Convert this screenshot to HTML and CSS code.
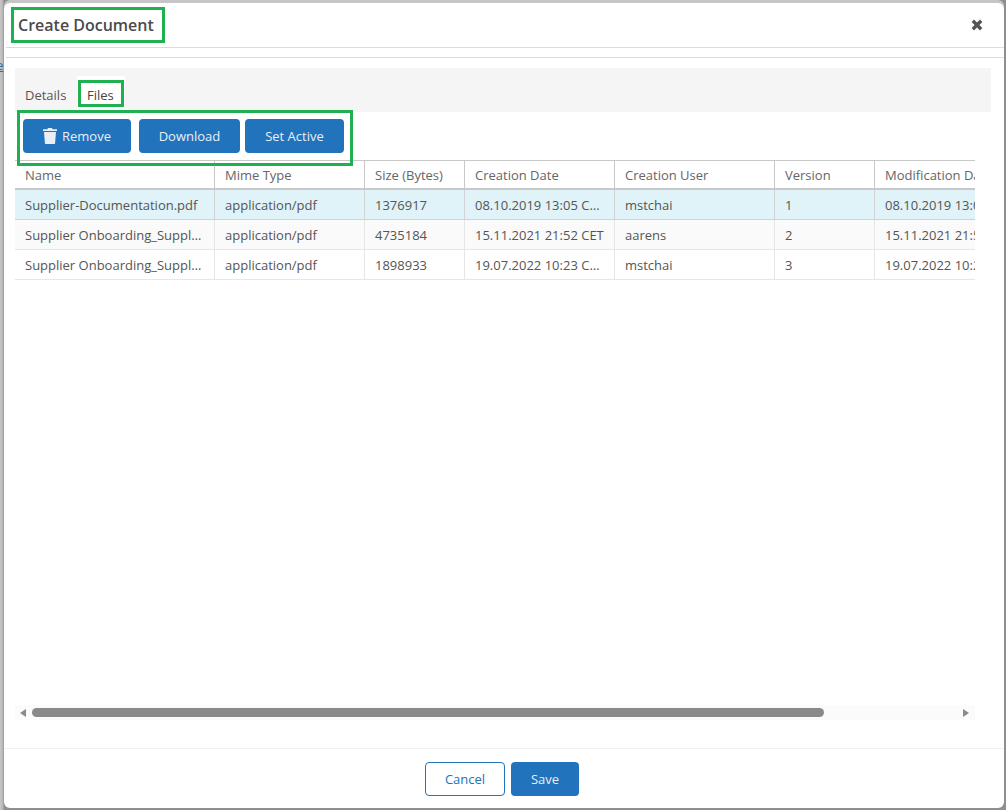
FILE: index.html
```html
<!DOCTYPE html>
<html lang="en">
<head>
    <meta charset="UTF-8">
    <meta name="viewport" content="width=device-width, initial-scale=1.0">
    <title>Create Document</title>
    <link rel="stylesheet" href="styles.css">
</head>
<body>
    <a class="backdrop-link" href="#">e</a>
    <div class="modal">
        <header class="modal-header">
            <h1 class="modal-title mark">Create Document</h1>
            <svg class="close-icon" width="12" height="12" viewBox="0 0 12 12">
                <path d="M1.8 1.8L10.2 10.2M10.2 1.8L1.8 10.2" stroke="#555" stroke-width="3.4" fill="none"/>
            </svg>
        </header>
        <div class="modal-divider"></div>

        <div class="modal-body">
            <div class="tabs">
                <a class="tab" href="#">Details</a>
                <a class="tab tab-active mark" href="#">Files</a>
            </div>

            <div class="toolbar mark">
                <button class="btn btn-remove">
                    <svg width="14" height="16" viewBox="0 0 14 16">
                        <path fill="#e9eff6" d="M5 0h4l.6 1.2H14V3H0V1.2h4.4zM1 4h12l-.9 11c0 .6-.5 1-1 1H2.900c-.5 0-1-.4-1-1z"/>
                    </svg>
                    Remove
                </button>
                <button class="btn btn-download">Download</button>
                <button class="btn btn-active">Set Active</button>
            </div>

            <div class="grid">
                <table>
                    <thead>
                        <tr>
                            <th class="col-name">Name</th>
                            <th class="col-mime">Mime Type</th>
                            <th class="col-size">Size (Bytes)</th>
                            <th class="col-date">Creation Date</th>
                            <th class="col-user">Creation User</th>
                            <th class="col-version">Version</th>
                            <th class="col-date">Modification Date</th>
                        </tr>
                    </thead>
                    <tbody>
                        <tr class="row-selected">
                            <td>Supplier-Documentation.pdf</td>
                            <td>application/pdf</td>
                            <td>1376917</td>
                            <td>08.10.2019 13:05 CEST</td>
                            <td>mstchai</td>
                            <td>1</td>
                            <td>08.10.2019 13:05 CEST</td>
                        </tr>
                        <tr class="row-alt">
                            <td>Supplier Onboarding_Supplier.pdf</td>
                            <td>application/pdf</td>
                            <td>4735184</td>
                            <td>15.11.2021 21:52 CET</td>
                            <td>aarens</td>
                            <td>2</td>
                            <td>15.11.2021 21:52 CET</td>
                        </tr>
                        <tr>
                            <td>Supplier Onboarding_Supplier.pdf</td>
                            <td>application/pdf</td>
                            <td>1898933</td>
                            <td>19.07.2022 10:23 CEST</td>
                            <td>mstchai</td>
                            <td>3</td>
                            <td>19.07.2022 10:23 CEST</td>
                        </tr>
                    </tbody>
                </table>
            </div>

            <div class="scrollbar">
                <svg width="6" height="8" viewBox="0 0 6 8"><path fill="#8a8a8a" d="M6 0v8L0 4z"/></svg>
                <div class="scroll-track"><div class="scroll-thumb"></div></div>
                <svg width="6" height="8" viewBox="0 0 6 8"><path fill="#8a8a8a" d="M0 0v8l6-4z"/></svg>
            </div>
        </div>

        <footer class="modal-footer">
            <button class="btn btn-outline">Cancel</button>
            <button class="btn btn-save">Save</button>
        </footer>
    </div>
</body>
</html>
```

FILE: styles.css
```css
* {
    box-sizing: border-box;
}

html, body {
    height: 100%;
}

body {
    margin: 0;
    padding: 3px 2px 2px 4px;
    position: relative;
    overflow: hidden;
    font-family: "Open Sans", sans-serif;
    font-size: 13px;
    color: #555;
    background: linear-gradient(to right, #c9c9c9 0, #b4b4b4 3px, #8f8f8f 4px);
}

.backdrop-link {
    position: absolute;
    left: -4px;
    top: 56px;
    color: #2a6cc0;
    font-size: 13px;
}

.modal {
    position: relative;
    height: 100%;
    display: flex;
    flex-direction: column;
    background-color: white;
    border-radius: 6px;
    box-shadow: 0 -3px 0 #c6c6c6;
}

.modal-header {
    height: 45px;
    flex: none;
    display: flex;
    align-items: flex-start;
    justify-content: space-between;
    padding: 7px 21px 0 12px;
    border-bottom: 1px solid #dcdcdc;
    margin-left: 2px;
}

.modal-title {
    position: relative;
    margin: 0;
    font-size: 16px;
    font-weight: 600;
    line-height: 30px;
    color: #4a4a4a;
}

.close-icon {
    margin-top: 9px;
}

/* green annotation frames drawn over the UI */
.mark::after {
    content: "";
    box-sizing: border-box;
    position: absolute;
    border: 3px solid #1fb14f;
    pointer-events: none;
    z-index: 2;
}

.modal-title.mark::after {
    left: -7px;
    right: -11px;
    top: -3px;
    bottom: -3px;
}

.modal-divider {
    flex: none;
    height: 10px;
    margin-left: 2px;
    border-bottom: 1px solid #dcdcdc;
}

.modal-body {
    flex: 1;
    display: flex;
    flex-direction: column;
    padding: 10px 13px 28px 11px;
    min-height: 0;
}

.tabs {
    flex: none;
    height: 44px;
    display: flex;
    align-items: flex-end;
    background-color: #f5f5f5;
}

.tab {
    width: 62px;
    height: 36px;
    padding: 9px 0 0 10px;
    line-height: 20px;
    color: #555;
    text-decoration: none;
}

.tab-active {
    width: 48px;
    position: relative;
    background-color: white;
    color: #444;
}

.tab-active.mark::after {
    left: 1px;
    right: 1px;
    top: 4px;
    bottom: 5px;
}

.toolbar {
    position: relative;
    flex: none;
    height: 48px;
    padding: 7px 0 0 8px;
    display: flex;
    align-items: flex-start;
    gap: 5px;
}

.toolbar.mark::after {
    left: 2px;
    width: 336px;
    top: -2px;
    bottom: -6px;
}

.btn {
    height: 34px;
    padding: 0 20px;
    display: inline-flex;
    align-items: center;
    gap: 5px;
    border: none;
    border-radius: 4px;
    background-color: #2173bc;
    color: #e9eff6;
    font-family: inherit;
    font-size: 13px;
    cursor: pointer;
}

.btn-remove {
    margin-right: 3px;
}

.btn-download {
    width: 101px;
    padding: 0;
    justify-content: center;
}

.btn-active {
    width: 99px;
    padding: 0;
    justify-content: center;
}

.btn-outline {
    width: 80px;
    justify-content: center;
    border: 1px solid #2173bc;
    background-color: white;
    color: #2173bc;
}

.btn-save {
    width: 68px;
    justify-content: center;
}

.grid {
    flex: 1;
    margin-right: 16px;
    overflow: hidden;
    min-height: 0;
}

table {
    width: 1010px;
    table-layout: fixed;
    border-collapse: separate;
    border-spacing: 0;
}

th, td {
    padding: 0 10px;
    overflow: hidden;
    white-space: nowrap;
    text-overflow: ellipsis;
    text-align: left;
    font-weight: 400;
    border-right: 1px solid #e6e6e6;
}

th {
    height: 30px;
    color: #666;
    border-top: 1px solid #c8c8c8;
    border-bottom: 2px solid #c8c8c8;
    border-right-color: #c8c8c8;
}

td {
    height: 30px;
    border-bottom: 1px solid #e6e6e6;
}

.col-name { width: 200px; }
.col-mime { width: 150px; }
.col-size { width: 100px; }
.col-date { width: 150px; }
.col-user { width: 160px; }
.col-version { width: 100px; }

.row-selected td {
    background-color: #dff3f8;
    border-color: #d2d2d2;
}

.row-alt td {
    background-color: #fafafa;
}

td:last-child, th:last-child {
    text-overflow: clip;
}

.scrollbar {
    flex: none;
    width: 960px;
    height: 15px;
    display: flex;
    align-items: center;
    gap: 6px;
    padding: 0 6px 0 5px;
    background-color: #fbfbfb;
}

.scroll-track {
    flex: 1;
}

.scroll-thumb {
    width: 792px;
    height: 9px;
    border-radius: 5px;
    background-color: #8a8a8a;
}

.modal-footer {
    flex: none;
    height: 60px;
    display: flex;
    justify-content: center;
    gap: 6px;
    padding: 13px 4px 0 0;
    border-top: 1px solid #f0f0f0;
}
```
